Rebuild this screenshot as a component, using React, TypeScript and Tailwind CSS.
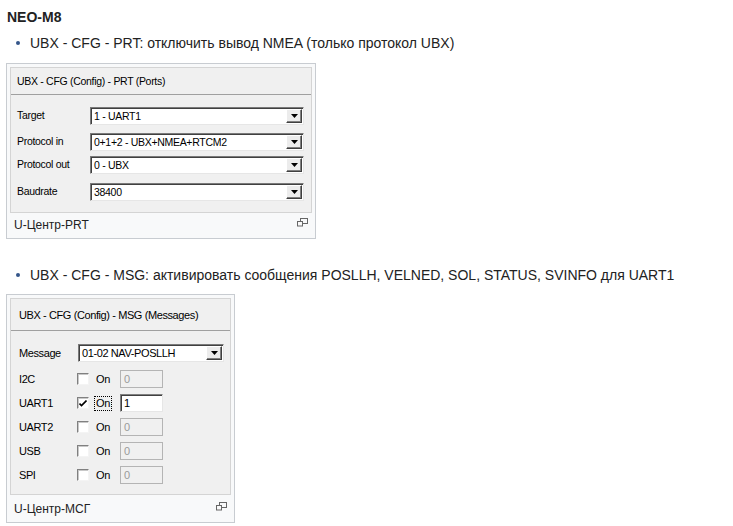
import React from "react";

const ui = { fontFamily: '"Liberation Sans", Arial, sans-serif' };

function Arrow() {
  return (
    <svg width="7" height="4" viewBox="0 0 7 4">
      <path d="M0 0h7L3.5 4z" fill="#000" />
    </svg>
  );
}

function Combo({ value, w }: { value: string; w: string }) {
  return (
    <div
      className={`${w} flex h-full items-stretch border border-t-[#7a7a7a] border-l-[#7a7a7a] border-b-[#e6e6e6] border-r-[#e6e6e6] bg-white shadow-[inset_1px_1px_0_#404040]`}
    >
      <span className="flex flex-1 items-center pl-[3px] pt-[1px]">{value}</span>
      <span className="my-[1px] mr-[1px] flex w-[16px] items-center justify-center border border-t-[#ffffff] border-l-[#ffffff] border-b-[#404040] border-r-[#404040] bg-[#ececec] shadow-[inset_-1px_-1px_0_#808080]">
        <Arrow />
      </span>
    </div>
  );
}

function Magnify() {
  return (
    <svg width="11" height="9" viewBox="0 0 11 9" className="mt-[2px] mr-[4px]">
      <rect x="3.5" y="0.5" width="7" height="5" fill="none" stroke="#666" />
      <rect x="0.5" y="3.5" width="5" height="4.5" fill="#f9f9f9" stroke="#666" />
    </svg>
  );
}

function Frame({
  width,
  caption,
  captionPt,
  children,
}: {
  width: string;
  caption: string;
  captionPt: string;
  children: React.ReactNode;
}) {
  return (
    <div className={`${width} border border-[#c8ccd1] bg-[#f8f9fa] p-[3px] pb-[4px]`}>
      {children}
      <div className={`${captionPt} flex items-start justify-between pl-[4px] text-[12px] leading-[18px] text-[#222]`}>
        <span>{caption}</span>
        <Magnify />
      </div>
    </div>
  );
}

function Check({ checked }: { checked?: boolean }) {
  return (
    <span className="flex h-[12px] w-[12px] items-center justify-center border border-t-[#808080] border-l-[#808080] border-b-[#f4f4f4] border-r-[#f4f4f4] bg-white shadow-[inset_1px_1px_0_#c8c8c8]">
      {checked && (
        <svg width="8" height="7" viewBox="0 0 8 7">
          <path d="M0.5 3.5l2 2 5-5" fill="none" stroke="#000" strokeWidth="1.6" />
        </svg>
      )}
    </span>
  );
}

function PortRow({ name, on }: { name: string; on?: boolean }) {
  return (
    <div className="flex h-[24px] items-center">
      <span className="w-[58px]">{name}</span>
      <Check checked={on} />
      <span className={`ml-[5px] px-[1px] leading-[13px] ${on ? "border border-dotted border-black" : "border border-transparent"}`}>
        On
      </span>
      <span
        className={`ml-[8px] flex h-[18px] w-[43px] items-center pl-[3px] ${
          on
            ? "border border-t-[#808080] border-l-[#808080] border-b-[#e6e6e6] border-r-[#e6e6e6] bg-white text-black shadow-[inset_1px_1px_0_#404040]"
            : "border border-[#b4b4b4] bg-[#f0f0f0] text-[#9a9a9a]"
        }`}
      >
        {on ? "1" : "0"}
      </span>
    </div>
  );
}

export default function App() {
  return (
    <div
      className="min-h-[526px] bg-white pl-[6px] pt-[7px] text-[#222]"
      style={{ fontFamily: '"Liberation Sans", Arial, sans-serif' }}
    >
      <div className="pl-[1px] text-[14px] font-bold leading-[20px]">NEO-M8</div>

      <div className="mt-[6px] flex items-center text-[14px] leading-[20px]">
        <span className="ml-[10px] mr-[10px] h-[4px] w-[4px] rounded-full bg-[#34558a]" />
        <span>UBX - CFG - PRT: отключить вывод NMEA (только протокол UBX)</span>
      </div>

      <div className="mt-[10px]">
        <Frame width="w-[310px]" caption="U-Центр-PRT" captionPt="pt-[3px]">
          <div
            className="h-[146px] w-[302px] border border-[#d4d4d4] bg-[#f0f0f0] text-[10.5px] tracking-[-0.3px] text-black"
            style={ui}
          >
            <div className="flex h-[26px] items-center pl-[6px] pt-[2px]">
              UBX - CFG (Config) - PRT (Ports)
            </div>
            <div className="h-px bg-[#a0a0a0]" />
            <div className="mt-[12px] flex h-[18px] items-center pl-[6px]">
              <span className="w-[73px]">Target</span>
              <Combo value="1 - UART1" w="w-[214px]" />
            </div>
            <div className="mt-[8px] flex h-[18px] items-center pl-[6px]">
              <span className="w-[73px]">Protocol in</span>
              <Combo value="0+1+2 - UBX+NMEA+RTCM2" w="w-[214px]" />
            </div>
            <div className="mt-[5px] flex h-[18px] items-center pl-[6px]">
              <span className="w-[73px]">Protocol out</span>
              <Combo value="0 - UBX" w="w-[214px]" />
            </div>
            <div className="mt-[9px] flex h-[18px] items-center pl-[6px]">
              <span className="w-[73px]">Baudrate</span>
              <Combo value="38400" w="w-[214px]" />
            </div>
          </div>
        </Frame>
      </div>

      <div className="mt-[26px] flex items-center text-[14px] leading-[20px]">
        <span className="ml-[10px] mr-[10px] h-[4px] w-[4px] rounded-full bg-[#34558a]" />
        <span>
          UBX - CFG - MSG: активировать сообщения POSLLH, VELNED, SOL, STATUS, SVINFO для UART1
        </span>
      </div>

      <div className="mt-[9px]">
        <Frame width="w-[229px]" caption="U-Центр-MCГ" captionPt="pt-[5px]">
          <div
            className="h-[197px] w-[221px] border border-[#d4d4d4] bg-[#f0f0f0] text-[11px] tracking-[-0.4px] text-black"
            style={ui}
          >
            <div className="flex h-[31px] items-center pl-[8px] pt-[1px]">
              UBX - CFG (Config) - MSG (Messages)
            </div>
            <div className="h-px bg-[#a0a0a0]" />
            <div className="mt-[13px] flex h-[18px] items-center pl-[8px]">
              <span className="w-[59px]">Message</span>
              <Combo value="01-02 NAV-POSLLH" w="w-[146px]" />
            </div>
            <div className="mt-[5px] pl-[8px]">
              <PortRow name="I2C" />
              <PortRow name="UART1" on />
              <PortRow name="UART2" />
              <PortRow name="USB" />
              <PortRow name="SPI" />
            </div>
          </div>
        </Frame>
      </div>
    </div>
  );
}
